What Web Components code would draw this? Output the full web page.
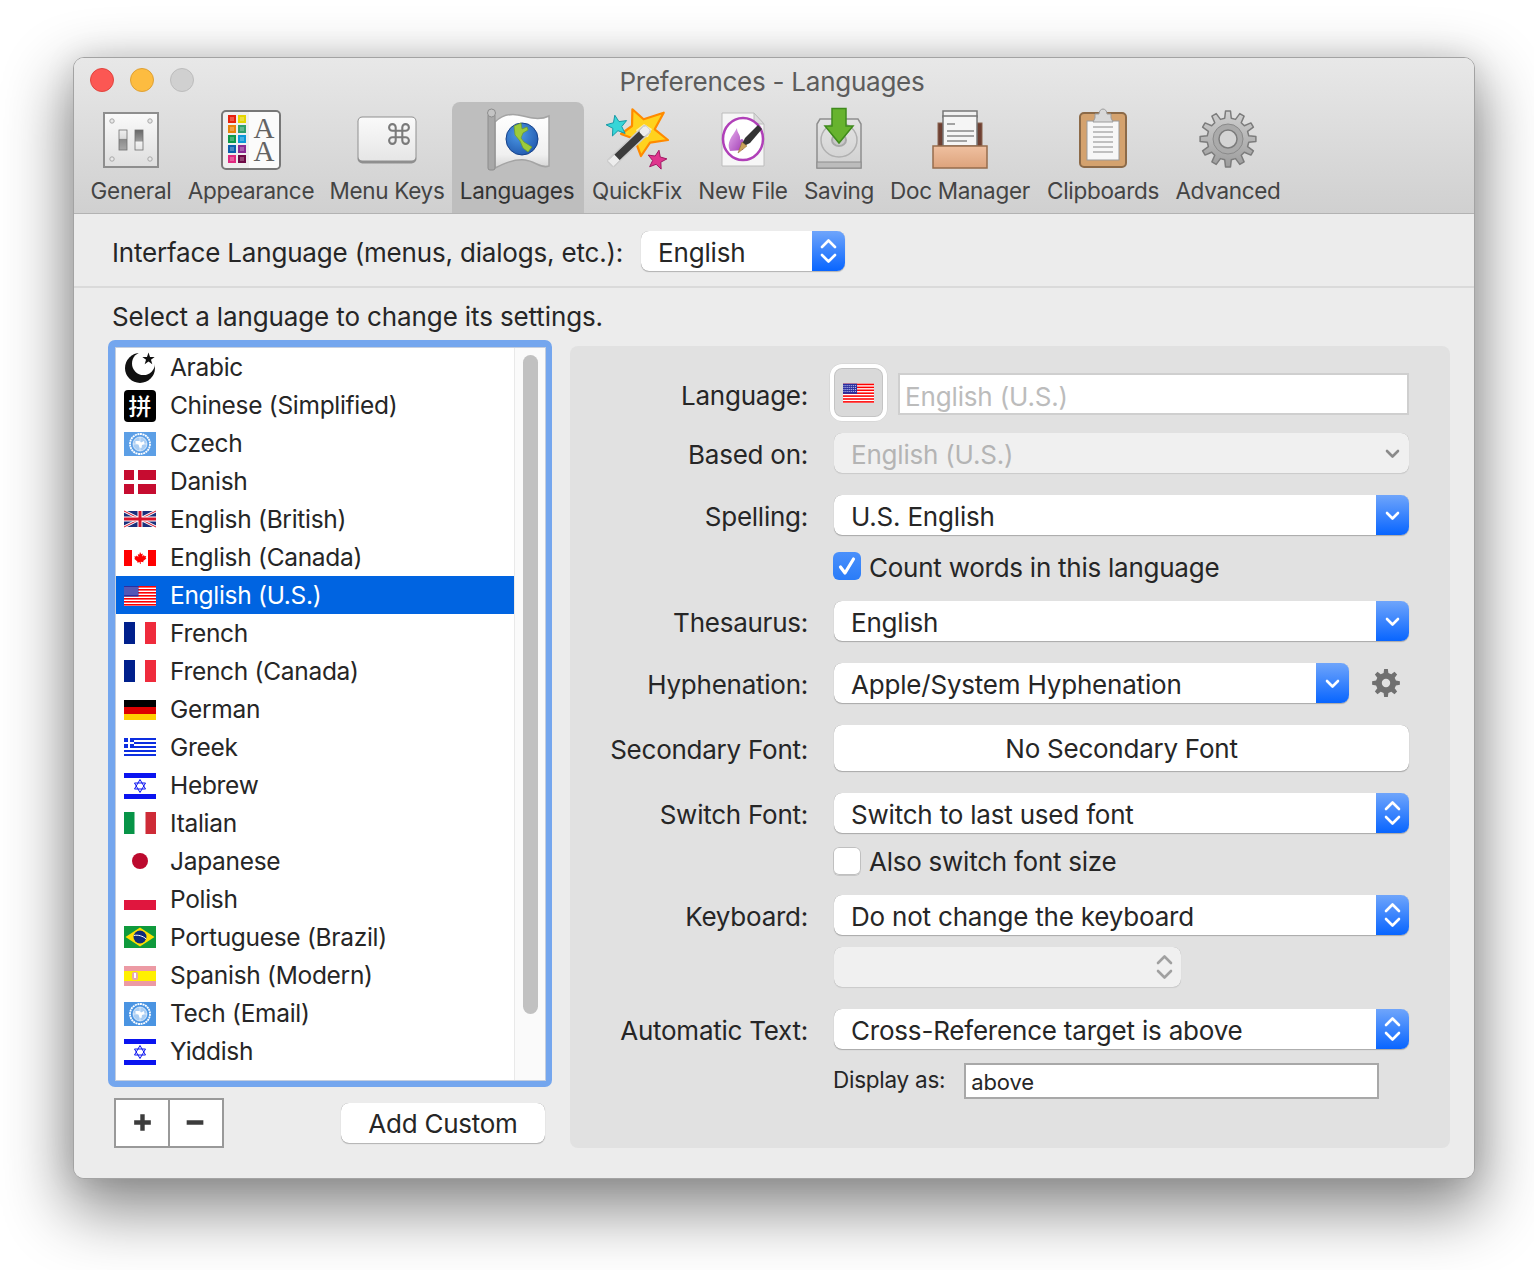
<!DOCTYPE html>
<html><head><meta charset="utf-8"><title>Preferences - Languages</title>
<style>
html,body{margin:0;padding:0;background:#fff;}
body{padding:57px 0 0 73px;height:1213px;overflow:hidden;font-family:Inter,"Liberation Sans",sans-serif;}
</style></head><body>
<mac-window>
  <title-bar>Preferences - Languages</title-bar>
  <tool-bar>
    <tool-item w="98" icon="general">General</tool-item>
    <tool-item w="142" icon="appearance">Appearance</tool-item>
    <tool-item w="130" icon="keys">Menu Keys</tool-item>
    <tool-item w="132" icon="languages" selected>Languages</tool-item>
    <tool-item w="106" icon="quickfix">QuickFix</tool-item>
    <tool-item w="106" icon="newfile">New File</tool-item>
    <tool-item w="86" icon="saving">Saving</tool-item>
    <tool-item w="156" icon="doc">Doc Manager</tool-item>
    <tool-item w="130" icon="clip">Clipboards</tool-item>
    <tool-item w="120" icon="gear">Advanced</tool-item>
  </tool-bar>
  <lang-bar></lang-bar>
  <pref-content></pref-content>
</mac-window>
<script>
const FONT='Inter,"Liberation Sans",sans-serif';
const LS='-0.25px';
function gear(cx,cy,ro,rr,n,hole){
  let d='';const st=Math.PI*2/n;
  for(let i=0;i<n;i++){
    const a=i*st-Math.PI/2;
    const pts=[[rr,-.30],[ro,-.17],[ro,.17],[rr,.30]];
    pts.forEach((p,j)=>{const t=a+p[1]*st;
      d+=(i==0&&j==0?'M':'L')+(cx+p[0]*Math.cos(t)).toFixed(2)+' '+(cy+p[0]*Math.sin(t)).toFixed(2)+' ';});
  }
  d+='Z ';
  if(hole)d+=`M${cx+hole} ${cy} A${hole} ${hole} 0 1 0 ${cx-hole} ${cy} A${hole} ${hole} 0 1 0 ${cx+hole} ${cy} Z`;
  return d;
}
function star(cx,cy,r,r2,n,rot){
  let d='';for(let i=0;i<n*2;i++){const R=i%2?r2:r,t=rot+i*Math.PI/n;d+=(i?'L':'M')+(cx+R*Math.sin(t)).toFixed(2)+' '+(cy-R*Math.cos(t)).toFixed(2)+' ';}
  return d+'Z';
}
const swatches=[['#e8200c','#e4d400'],['#e8830c','#2f9f6a'],['#0b9a4a','#0b97d8'],['#0a5fae','#8a2a94'],['#e0287f','#6e0a46']];
const ICONS={
general:`<defs><linearGradient id="g" x1="0" y1="0" x2="0" y2="1"><stop offset="0" stop-color="#fafafa"/><stop offset="1" stop-color="#dedede"/></linearGradient>
<linearGradient id="s1" x1="0" y1="0" x2="0" y2="1"><stop offset="0" stop-color="#efefef"/><stop offset=".42" stop-color="#dcdcdc"/><stop offset=".47" stop-color="#8a8a8a"/><stop offset="1" stop-color="#a8a8a8"/></linearGradient>
<linearGradient id="s2" x1="0" y1="0" x2="0" y2="1"><stop offset="0" stop-color="#666"/><stop offset=".55" stop-color="#9a9a9a"/><stop offset=".6" stop-color="#f2f2f2"/><stop offset="1" stop-color="#e4e4e4"/></linearGradient></defs>
<rect x="8" y="9" width="54" height="54" fill="url(#g)" stroke="#8e8e8e" stroke-width="2"/>
<g fill="#e8e8e8" stroke="#a8a8a8" stroke-width="1"><circle cx="16" cy="17" r="2.200"/><circle cx="54" cy="17" r="2.200"/><circle cx="16" cy="55" r="2.200"/><circle cx="54" cy="55" r="2.200"/></g>
<rect x="23" y="26" width="8" height="20" fill="url(#s1)" stroke="#6f6f6f" stroke-width=".8"/>
<rect x="39" y="26" width="8" height="20" fill="url(#s2)" stroke="#6f6f6f" stroke-width=".8"/>`,
appearance:`<rect x="6" y="7" width="58" height="58" rx="4" fill="#efefef" stroke="#777" stroke-width="2"/>
<path d="M33 8h26a4 4 0 0 1 4 4v48a4 4 0 0 1-4 4H33z" fill="#fbfbfb"/>
${swatches.map((r,i)=>r.map((c,j)=>`<rect x="${12+j*10}" y="${11+i*10}" width="8" height="8" fill="${c}"/><rect x="${14+j*10}" y="${13+i*10}" width="4" height="4" fill="#fff" opacity=".25"/>`).join('')).join('')}
<text x="48 48" y="33.500 57" font-family="Liberation Serif" font-size="29" fill="#636363" text-anchor="middle" letter-spacing="0">AA</text>`,
keys:`<defs><linearGradient id="k" x1="0" y1="0" x2="0" y2="1"><stop offset="0" stop-color="#fafafa"/><stop offset="1" stop-color="#e6e6e6"/></linearGradient></defs>
<rect x="5.500" y="12.500" width="59" height="47" rx="5" fill="#8f8f8f"/><rect x="6.500" y="13.500" width="57" height="43" rx="4" fill="url(#k)"/>
<g transform="translate(33.800 16.800) scale(1.100)"><path d="M15 6v12a3 3 0 1 0 3-3H6a3 3 0 1 0 3 3V6a3 3 0 1 0-3 3h12a3 3 0 1 0-3-3" fill="none" stroke="#7a7a7a" stroke-width="1.900"/></g>`,
languages:`<defs><linearGradient id="f" x1="0" y1="0" x2="0" y2="1"><stop offset="0" stop-color="#fff"/><stop offset=".75" stop-color="#f0f0f0"/><stop offset="1" stop-color="#d4d4d4"/></linearGradient>
<radialGradient id="gl" cx=".4" cy=".35" r=".8"><stop offset="0" stop-color="#4d9be8"/><stop offset="1" stop-color="#1c50a6"/></radialGradient></defs>
<path d="M12 18C20 10 30 9 40 12 50 15 58 16 66 12V62C58 65 52 57 42 56 30 55 20 60 12 64Z" fill="url(#f)" stroke="#a4a4a4" stroke-width="1.500"/>
<rect x="5" y="10" width="7" height="56" rx="2" fill="#a8a8a8" stroke="#8c8c8c"/><circle cx="8.500" cy="9" r="4" fill="#c4c4c4" stroke="#8c8c8c"/>
<circle cx="39" cy="35" r="16" fill="url(#gl)" stroke="#15418a" stroke-width="1"/>
<path d="M31 22l7-3 1 6 5-2 1 3-5 3-2 5 3 4 8 5-4 5-5-4-3-7-5-6z" fill="#9ccb3b" stroke="#6f9a28" stroke-width=".7"/>`,
quickfix:`<path d="M30.400 5.300L41.600 15.300 61.700 8.700 52.700 25.300 66 36 48 38.700 39 52 32.600 35 19 30 30 22Z" fill="#ffd21e" stroke="#ff8a00" stroke-width="2.200" stroke-linejoin="round"/>
<path d="M34 26L42 20 50 25 46 33 38 34Z" fill="#fff3a8"/>
<path d="${star(15,22,11,4.800,5,-.2)}" fill="#37d6d8" stroke="#1799a6" stroke-width="1"/>
<path d="${star(55,56,10,4.400,5,.2)}" fill="#e0358e" stroke="#a01a64" stroke-width="1"/>
<g transform="rotate(-43.500 27 42)"><rect x="1" y="37.500" width="52" height="9" rx="2" fill="#3c3c3c" stroke="#ccc" stroke-width="1.500"/><rect x="1.500" y="38" width="9" height="8" fill="#ededed"/><rect x="44" y="38" width="9" height="8" rx="2" fill="#ededed"/></g>`,
newfile:`<defs><linearGradient id="fl" x1="0" y1="0" x2="1" y2="1"><stop offset="0" stop-color="#e8b0ee"/><stop offset="1" stop-color="#a03cb4"/></linearGradient></defs>
<path d="M14 9H46L56 20V62H14Z" fill="#f6f6f6" stroke="#bcbcbc"/><path d="M46 9V20H56Z" fill="#dcdcdc" stroke="#bcbcbc"/>
<ellipse cx="35" cy="35" rx="20" ry="21" fill="#fff" stroke="#b040b8" stroke-width="2.500"/>
<path d="M22 47C18 38 24 33 29 24 29 30 33 30 32 36 35 33 37 36 35 46Z" fill="url(#fl)"/>
<path d="M32 44L37 34 50 21 54 25 42 39Z" fill="#333"/><path d="M30 49L34 38 39 42Z" fill="#c9a25a" stroke="#8a6a30" stroke-width=".5"/>`,
saving:`<defs><linearGradient id="d" x1="0" y1="0" x2="0" y2="1"><stop offset="0" stop-color="#e4e4e4"/><stop offset="1" stop-color="#d0d0d0"/></linearGradient></defs>
<path d="M16 15H54L57 20V64H13V20Z" fill="url(#d)" stroke="#8e8e8e" stroke-width="1.500"/>
<rect x="13" y="58" width="44" height="6" fill="#bcbcbc" stroke="#8e8e8e"/>
<ellipse cx="35" cy="36" rx="18" ry="17" fill="none" stroke="#b0b0b0" stroke-width="1.500"/><ellipse cx="35" cy="36" rx="7" ry="6" fill="#c9c9c9" stroke="#a8a8a8" stroke-width="2"/>
<path d="M28 4.500H42V22H49L35 39 21 22H28Z" fill="#67b32e" stroke="#3f8a1c" stroke-width="1.500"/>`,
doc:`<defs><linearGradient id="b" x1="0" y1="0" x2="0" y2="1"><stop offset="0" stop-color="#efc0a0"/><stop offset="1" stop-color="#dda37c"/></linearGradient></defs>
<rect x="13" y="19" width="44" height="24" fill="#6e4033" stroke="#8a6450"/>
<rect x="18" y="7" width="34" height="6" fill="#f0f0f0" stroke="#777" stroke-width="1.500"/>
<rect x="18" y="12" width="34" height="30" fill="#f5f5f5" stroke="#777" stroke-width="1.500"/>
<path d="M22 20h8M22 27h27M22 32h27M22 37h20" stroke="#888" stroke-width="1.500"/>
<rect x="8" y="42" width="54" height="22" fill="url(#b)" stroke="#966c4c" stroke-width="1.500"/>`,
clip:`<rect x="12" y="9" width="46" height="54" rx="4" fill="#d4a26e" stroke="#8c6a48" stroke-width="2"/>
<rect x="19" y="17" width="32" height="39" fill="#f7f7f7" stroke="#9a9a9a" stroke-width="1"/>
<path d="M27 10H31C31 7 33 5 35 5S39 7 39 10H43V14L45 18H25L27 14Z" fill="#d8d8d8" stroke="#9c9c9c" stroke-width="1"/>
<path d="M25 23h20M25 28h20M25 33h20M25 38h20M25 43h20M25 48h20" stroke="#8a8a8a" stroke-width="1.200"/>`,
gear:`<defs><linearGradient id="ge" x1="0" y1="0" x2="0" y2="1"><stop offset="0" stop-color="#d0d0d0"/><stop offset="1" stop-color="#9c9c9c"/></linearGradient></defs>
<path d="${gear(35,35,28,21,12,0)}" fill="url(#ge)" stroke="#7c7c7c" stroke-width="1.500" stroke-linejoin="round"/>
<circle cx="35" cy="35" r="15" fill="#aaa" stroke="#8a8a8a" stroke-width="1"/><circle cx="35" cy="35" r="9" fill="#d4d4d4" stroke="#7c7c7c" stroke-width="1.500"/>`
};
function un(bg){return `<rect x="0" y="8" width="32" height="24" fill="${bg}"/>
<circle cx="16" cy="20" r="10" fill="none" stroke="#fff" stroke-width="1.800" stroke-dasharray="2 .6"/><circle cx="16" cy="20" r="7" fill="#a9cdf3" stroke="#fff" stroke-width=".6"/>
<path d="M16 13v14M9 20h14" stroke="#fff" stroke-width=".5"/>
<path d="M11.500 17h4l1.500 1.500 3-1.500 .5 3-2.500 1-.5 3-2-.5-1-3-3-1z" fill="#fff"/>`;}
function israel(){return `<rect x="0" y="7" width="32" height="26" fill="#fff"/><rect x="0" y="7" width="32" height="5" fill="#0a14f0"/><rect x="0" y="28" width="32" height="5" fill="#0a14f0"/>
<path d="M16 13.500l5.500 9.500h-11zM16 26.500l-5.500-9.500h11z" fill="none" stroke="#0a14f0" stroke-width="1"/>`;}
const fr=`<rect x="0" y="8" width="11" height="22" fill="#00208c"/><rect x="21" y="8" width="11" height="22" fill="#ef2b3c"/>`;
const FLAGS={
arabic:`<circle cx="16" cy="20" r="15" fill="#111"/><circle cx="19.500" cy="15.500" r="11.500" fill="#fff"/><path d="${star(24.500,11,6.500,2.600,5,0)}" fill="#111"/>`,
chinese:`<rect x="0" y="4" width="32" height="32" rx="4" fill="#000"/><text x="16" y="28.500" font-family="Noto Sans CJK SC" font-size="23" font-weight="500" fill="#fff" text-anchor="middle" letter-spacing="0">拼</text>`,
un:un('#5c9fe6'),
danish:`<rect x="0" y="8" width="32" height="24" fill="#c60c30"/><rect x="10" y="8" width="4" height="24" fill="#fff"/><rect x="0" y="18" width="32" height="4" fill="#fff"/>`,
british:`<rect x="0" y="11" width="32" height="16" fill="#1a2f7c"/><path d="M0 11L32 27M32 11L0 27" stroke="#fff" stroke-width="3"/><path d="M0 11L32 27M32 11L0 27" stroke="#d6142c" stroke-width="1"/><path d="M16 11V27M0 19H32" stroke="#fff" stroke-width="5"/><path d="M16 11V27M0 19H32" stroke="#d6142c" stroke-width="3"/>`,
canada:`<rect x="0" y="12" width="8" height="16" fill="#ff0000"/><rect x="24" y="12" width="8" height="16" fill="#ff0000"/><path d="M16 14l1.300 2.300 1.500-.7-.6 3 1.800-1.600.5 1.200 1.700-.3-.6 2 .8.5-3.200 2.600.3 1.200-2.800-.4V26h-.8v-1.800l-2.800.4.3-1.200-3.200-2.600.8-.5-.6-2 1.700.3.5-1.200 1.800 1.600-.6-3 1.500.7z" fill="#ff0000"/>`,
us:`<rect x="0" y="10" width="32" height="20" fill="#fff"/>${[10,13,16,19,22,25,28].map(y=>`<rect x="0" y="${y}" width="32" height="1.600" fill="#ff0000"/>`).join('')}<rect x="0" y="10" width="14.500" height="10.500" fill="#2a2ea0"/>${[12,14,16,18].map(y=>[1,3,5,7,9,11,13].map(x=>`<rect x="${x-.5}" y="${y-.5}" width="1" height="1" fill="#cfd4f5"/>`).join('')).join('')}`,
french:fr,
german:`<rect x="0" y="10" width="32" height="7" fill="#000"/><rect x="0" y="17" width="32" height="7" fill="#dd0000"/><rect x="0" y="24" width="32" height="6" fill="#ffce00"/>`,
greek:`<rect x="0" y="10" width="32" height="18" fill="#fff"/>${[10,14,18,22,26].map(y=>`<rect x="0" y="${y}" width="32" height="2" fill="#0d2ee0"/>`).join('')}<rect x="0" y="10" width="10" height="10" fill="#0d2ee0"/><rect x="4" y="10" width="2" height="10" fill="#fff"/><rect x="0" y="14" width="10" height="2" fill="#fff"/>`,
hebrew:israel(),
italian:`<rect x="0" y="8" width="10.500" height="22" fill="#079447"/><rect x="21.500" y="8" width="10.500" height="22" fill="#ce2b37"/>`,
japanese:`<circle cx="16" cy="19" r="8" fill="#bc0a2e"/>`,
polish:`<rect x="0" y="20" width="32" height="10" fill="#e0163e"/>`,
brazil:`<rect x="0" y="8" width="32" height="22" fill="#0f9a3c"/><path d="M16 9.500L30.500 19 16 28.500 1.500 19Z" fill="#ffdf00"/><circle cx="16" cy="19" r="6.500" fill="#0e2a7a"/><path d="M9.800 17.500C14 16.500 19 18 22.200 21" stroke="#fff" stroke-width="1" fill="none"/>`,
spanish:`<rect x="0" y="10" width="32" height="20" fill="#ec9aa4"/><rect x="0" y="15" width="32" height="10" fill="#fff000"/><rect x="8" y="16" width="6" height="8" rx="2" fill="#e8a8b0"/><rect x="10" y="17" width="2" height="5" fill="#fff"/>`,
tech:un('#4a94e2'),
yiddish:israel()
};
function def(name,html){
  customElements.define(name,class extends HTMLElement{
    constructor(){super();const r=this.attachShadow({mode:'open'});if(typeof html!=='function')r.innerHTML=html;}
    connectedCallback(){ if(typeof html==='function')this.shadowRoot.innerHTML=html(this); }
  });
}
def('mac-window',`<style>:host{display:flex;flex-direction:column;box-sizing:border-box;width:1402px;height:1122px;background:#ececec;border:1px solid #a3a3a3;border-radius:11px;
box-shadow:0 26px 64px 6px rgba(0,0,0,.46),0 0 30px rgba(0,0,0,.10);font-family:${FONT};letter-spacing:${LS};color:#262626;}
.clip{display:flex;flex-direction:column;height:100%;border-radius:10px;overflow:hidden;background:#ececec;}</style><div class="clip"><slot></slot></div>`);

def('title-bar',`<style>:host{display:block;position:relative;height:44px;background:linear-gradient(#e8e8e8,#e1e1e1);text-align:center;font-size:26px;line-height:48px;color:#5c5c5c;}
.lights{position:absolute;left:16px;top:10px;display:flex;gap:16px;}
.lights i{display:block;box-sizing:border-box;width:24px;height:24px;border-radius:50%;}
.r{background:#fc5753;border:1px solid #e0443e;}.y{background:#fdbc40;border:1px solid #dea034;}.g{background:#d0d0d0;border:1px solid #bcbcbc;}
span{display:inline-block;transform:translateX(-2px);}</style>
<div class="lights"><i class="r"></i><i class="y"></i><i class="g"></i></div><span><slot></slot></span>`);

def('tool-bar',`<style>:host{display:flex;box-sizing:content-box;height:111px;padding-left:8px;background:linear-gradient(#e1e1e1,#d0d0d0);border-bottom:1px solid #b2b2b2;}</style><slot></slot>`);

def('tool-item',el=>`<style>:host{display:flex;flex-direction:column;align-items:center;flex:0 0 ${el.getAttribute('w')}px;height:111px;box-sizing:border-box;border-radius:8px 8px 0 0;font-size:22.500px;letter-spacing:-.3px;color:#444;}
:host([selected]){background:#bebebe;padding-right:2px;color:#333;}
svg{display:block;margin-top:2px;flex:none;overflow:visible;}
:host([selected]) svg{margin-left:2px;}
span{line-height:34px;white-space:nowrap;}</style>
<svg width="70" height="70" viewBox="0 0 70 70">${ICONS[el.getAttribute('icon')]}</svg><span><slot></slot></span>`);

def('lang-bar',`<style>:host{display:flex;align-items:center;box-sizing:border-box;height:74px;padding:0 0 0 38px;border-bottom:2px solid #dadada;font-size:26px;}
span{line-height:40px;transform:translateY(3px);letter-spacing:-.18px;}
pref-select{margin:2px 0 0 18px;}</style>
<span>Interface Language (menus, dialogs, etc.):</span><pref-select w="204" arrows="both">English</pref-select>`);

def('pref-select',el=>{
 const w=el.getAttribute('w')||575,a=el.getAttribute('arrows')||'both',dis=el.hasAttribute('disabled');
 const col=dis?(a==='both'?'#a0a0a0':'#8a8a8a'):'#fff';
 const p=a==='both'?'M9.500 16l6.500-6.500 6.500 6.500M9.500 24l6.500 6.500 6.500-6.500':'M10.500 18l5.500 5.500 5.500-5.500';
 const svg=`<svg width="33" height="40" viewBox="0 0 32 40"><path d="${p}" fill="none" stroke="${col}" stroke-width="2.600" stroke-linecap="round" stroke-linejoin="round"/></svg>`;
 return `<style>:host{display:flex;box-sizing:border-box;width:${w}px;height:40px;flex:none;font-size:26px;line-height:40px;letter-spacing:-.2px;border-radius:8px;background:${dis?'#f0f0f0':'#fff'};color:${dis?'#b4b4b4':'#262626'};
 box-shadow:0 0 .5px rgba(0,0,0,${dis?'.3':'.45'}),0 1px 1px rgba(0,0,0,${dis?'.1':'.25'});}
 .t{flex:1;padding:2px 0 0 17px;box-sizing:border-box;height:40px;white-space:nowrap;overflow:hidden;}
 .a{flex:none;width:33px;height:40px;border-radius:0 8px 8px 0;${dis?'':'background:linear-gradient(#6fa5fb,#0865ff);'}}
 svg{display:block;}</style><div class="t"><slot></slot></div><div class="a">${svg}</div>`;
});

def('flag-icon',el=>`<style>:host{display:block;width:var(--fw,32px);flex:none;}svg{display:block;width:100%;height:auto;overflow:visible;}</style>
<svg viewBox="0 0 32 38">${FLAGS[el.getAttribute('kind')]}</svg>`);

def('lang-row',`<style>:host{display:flex;align-items:center;box-sizing:border-box;height:38px;padding-left:8px;gap:14px;font-size:24.500px;letter-spacing:-.3px;color:#262626;}
:host([selected]){background:#0064e1;color:#fff;}span{line-height:38px;white-space:nowrap;}</style><slot name="f"></slot><span><slot></slot></span>`);

def('lang-list',`<style>:host{display:block;box-sizing:border-box;width:444px;height:747px;padding:8px 7px 7px 8px;background:#74a6ee;border-radius:7px;}
.in{display:flex;height:100%;background:#fff;box-shadow:0 0 0 1px #c4cede;}
.rows{flex:1;}
.sb{flex:none;width:31px;box-sizing:border-box;padding:7px 7px 0 8px;background:#fafafa;border-left:1px solid #e9e9e9;}
.th{height:659px;background:#c1c1c1;border-radius:8px;}</style>
<div class="in"><div class="rows"><slot></slot></div><div class="sb"><div class="th"></div></div></div>`);

def('list-tools',`<style>:host{display:flex;align-items:flex-start;justify-content:space-between;width:437px;margin:11px 0 0 6px;}
.pm{display:flex;box-sizing:border-box;width:110px;height:50px;border:2px solid #999;background:#fff;}
.pm svg{flex:1;display:block;}
.pm svg+svg{border-left:2px solid #999;}
pref-button{width:204px;height:40px;margin:5px 6px 0 0;}</style>
<div class="pm"><svg viewBox="0 0 53 46"><path d="M27 14v17M18.500 22.500h17" stroke="#3c3c3c" stroke-width="4.500" fill="none"/></svg><svg viewBox="0 0 53 46"><path d="M17 22.500h17" stroke="#3c3c3c" stroke-width="4.500" fill="none"/></svg></div>
<pref-button>Add Custom</pref-button>`);

def('pref-button',`<style>:host{display:flex;align-items:center;justify-content:center;box-sizing:border-box;height:46px;font-size:26px;border-radius:8px;background:#fff;text-align:center;color:#262626;
box-shadow:0 0 .5px rgba(0,0,0,.45),0 1px 1px rgba(0,0,0,.25);}</style><span><slot></slot></span>`);

def('mac-check',el=>{const on=el.hasAttribute('checked');return `<style>:host{display:flex;align-items:center;height:28px;font-size:26px;gap:8px;}
i{display:block;box-sizing:border-box;width:28px;height:28px;border-radius:6px;flex:none;${on?'background:linear-gradient(#4a90fb,#2a7cf8);':'background:#fff;box-shadow:inset 0 0 0 1px #c0c0c0,0 1px 0 rgba(0,0,0,.12);'}}
svg{display:block;}span{line-height:28px;transform:translateY(${on?2:1}px);white-space:nowrap;}</style>
<i>${on?'<svg width="28" height="28" viewBox="0 0 28 28"><path d="M7.500 15l4.500 6 8.500-14" fill="none" stroke="#fff" stroke-width="3.200" stroke-linecap="round" stroke-linejoin="round"/></svg>':''}</i><span><slot></slot></span>`});

def('form-row',el=>`<style>:host{display:flex;align-items:center;gap:26px;margin-top:${el.getAttribute('top')||0}px;}
.l{flex:none;width:238px;text-align:right;font-size:26px;white-space:nowrap;transform:translateY(${el.getAttribute('ly')||1}px);}
.c{display:flex;align-items:center;min-width:0;}</style>
<div class="l">${el.getAttribute('label')||''}</div><div class="c"><slot></slot></div>`);

def('flag-well',`<style>:host{display:flex;align-items:center;justify-content:center;box-sizing:border-box;width:57px;height:57px;margin-left:-4px;border:4px solid #fff;border-radius:12px;background:#d9d9d9;box-shadow:inset 0 0 0 1px #c4c4c4,0 0 0 .5px #d0d0d0;--fw:31px;}
</style><slot></slot>`);

def('text-field',el=>{const d=el.hasAttribute('disabled'),h=+el.getAttribute('h');return `<style>:host{display:block;box-sizing:border-box;width:${el.getAttribute('w')}px;height:${h}px;line-height:${h-3}px;padding:0 0 0 5px;background:#fff;border:2px solid ${d?'#cfcfcf':'#a8a8a8'};font-size:${el.getAttribute('fs')||26}px;letter-spacing:-.15px;color:${d?'#bcbcbc':'#262626'};white-space:nowrap;}
span{display:inline-block;transform:translateY(${d?2:1}px);}</style><span><slot></slot></span>`});

def('pref-panel',`<style>:host{display:block;box-sizing:border-box;width:880px;height:802px;margin-top:6px;padding-top:18px;background:#e1e1e1;border-radius:8px;}</style><slot></slot>`);

const LANGS=[['arabic','Arabic'],['chinese','Chinese (Simplified)'],['un','Czech'],['danish','Danish'],['british','English (British)'],['canada','English (Canada)'],['us','English (U.S.)',1],['french','French'],['french','French (Canada)'],['german','German'],['greek','Greek'],['hebrew','Hebrew'],['italian','Italian'],['japanese','Japanese'],['polish','Polish'],['brazil','Portuguese (Brazil)'],['spanish','Spanish (Modern)'],['tech','Tech (Email)'],['yiddish','Yiddish']];

def('pref-content',`<style>:host{display:grid;grid-template-columns:444px 880px;column-gap:18px;padding:0 0 0 34px;font-size:26px;}
h2{grid-column:1/3;margin:0;font:inherit;height:52px;line-height:58px;padding-left:4px;letter-spacing:-.12px;}
.indent{margin-left:263px;}
.indent2{margin-left:263px;margin-top:14px;display:flex;align-items:center;gap:19px;font-size:22.500px;}
.indent2 span{transform:translateY(-2px);}
</style>
<h2>Select a language to change its settings.</h2>
<div>
 <lang-list>${LANGS.map(l=>`<lang-row${l[2]?' selected':''}><flag-icon slot="f" kind="${l[0]}"></flag-icon>${l[1]}</lang-row>`).join('')}</lang-list>
 <list-tools></list-tools>
</div>
<pref-panel>
 <form-row label="Language:" ly="3"><flag-well><flag-icon kind="us"></flag-icon></flag-well><text-field style="margin:2px 0 0 11px" w="511" h="42" disabled>English (U.S.)</text-field></form-row>
 <form-row label="Based on:" top="12"><pref-select arrows="one" disabled>English (U.S.)</pref-select></form-row>
 <form-row label="Spelling:" top="22"><pref-select arrows="one">U.S. English</pref-select></form-row>
 <mac-check class="indent" checked style="margin-top:17px">Count words in this language</mac-check>
 <form-row label="Thesaurus:" top="21"><pref-select arrows="one">English</pref-select></form-row>
 <form-row label="Hyphenation:" top="22"><pref-select w="515" arrows="one">Apple/System Hyphenation</pref-select><svg style="display:block;margin-left:23px;flex:none" width="28" height="28" viewBox="0 0 28 28"><path d="${gear(14,14,14,10.200,8,4.200)}" fill="#707070" fill-rule="evenodd"/></svg></form-row>
 <form-row label="Secondary Font:" top="22"><pref-button style="width:575px">No Secondary Font</pref-button></form-row>
 <form-row label="Switch Font:" top="22"><pref-select arrows="both">Switch to last used font</pref-select></form-row>
 <mac-check class="indent" style="margin-top:14px">Also switch font size</mac-check>
 <form-row label="Keyboard:" top="20"><pref-select arrows="both">Do not change the keyboard</pref-select></form-row>
 <form-row top="12"><pref-select w="347" arrows="both" disabled></pref-select></form-row>
 <form-row label="Automatic Text:" top="22"><pref-select arrows="both">Cross-Reference target is above</pref-select></form-row>
 <div class="indent2"><span>Display as:</span><text-field w="415" h="36" fs="22">above</text-field></div>
</pref-panel>`);
</script>
</body></html>
